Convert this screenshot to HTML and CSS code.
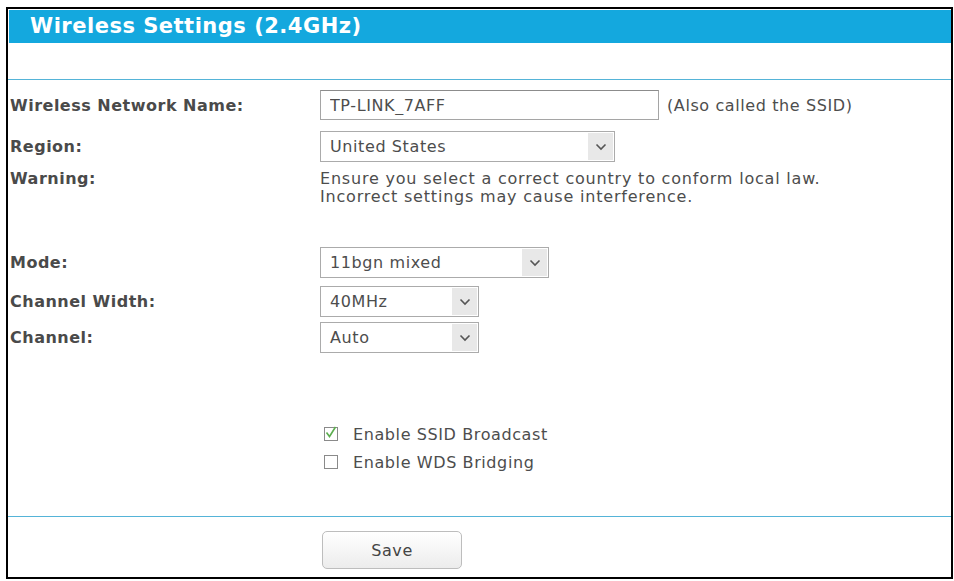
FILE: index.html
```html
<!DOCTYPE html>
<html lang="en">
<head>
<meta charset="UTF-8">
<title>Wireless Settings</title>
<link rel="stylesheet" href="styles.css">
</head>
<body>
<div class="frame">
  <h1 class="title">Wireless Settings (2.4GHz)</h1>
  <div class="rule top-rule"></div>

  <div class="row row-name">
    <label class="label" for="ssid">Wireless Network Name:</label>
    <div class="field">
      <input class="text" id="ssid" type="text" value="TP-LINK_7AFF">
      <span class="hint">(Also called the SSID)</span>
    </div>
  </div>

  <div class="row row-region">
    <label class="label">Region:</label>
    <div class="field">
      <div class="select w-region"><span class="value">United States</span><span class="arrow"><svg width="12" height="8" viewBox="0 0 12 8"><path d="M1.5 1.5 L6 6 L10.5 1.5" fill="none" stroke="#555" stroke-width="1.6"/></svg></span></div>
    </div>
  </div>

  <div class="row row-warning">
    <label class="label">Warning:</label>
    <div class="field note">Ensure you select a correct country to conform local law.<br>Incorrect settings may cause interference.</div>
  </div>

  <div class="row row-mode">
    <label class="label">Mode:</label>
    <div class="field">
      <div class="select w-mode"><span class="value">11bgn mixed</span><span class="arrow"><svg width="12" height="8" viewBox="0 0 12 8"><path d="M1.5 1.5 L6 6 L10.5 1.5" fill="none" stroke="#555" stroke-width="1.6"/></svg></span></div>
    </div>
  </div>

  <div class="row row-width">
    <label class="label">Channel Width:</label>
    <div class="field">
      <div class="select w-small"><span class="value">40MHz</span><span class="arrow"><svg width="12" height="8" viewBox="0 0 12 8"><path d="M1.5 1.5 L6 6 L10.5 1.5" fill="none" stroke="#555" stroke-width="1.6"/></svg></span></div>
    </div>
  </div>

  <div class="row row-channel">
    <label class="label">Channel:</label>
    <div class="field">
      <div class="select w-small"><span class="value">Auto</span><span class="arrow"><svg width="12" height="8" viewBox="0 0 12 8"><path d="M1.5 1.5 L6 6 L10.5 1.5" fill="none" stroke="#555" stroke-width="1.6"/></svg></span></div>
    </div>
  </div>

  <div class="row row-check first-check">
    <div class="label"></div>
    <div class="field check">
      <span class="box"><svg width="14" height="14" viewBox="0 0 14 14"><path d="M2.5 6.5 L5.5 10.5 L11.5 1" fill="none" stroke="#5cae4f" stroke-width="1.6"/></svg></span>
      <span>Enable SSID Broadcast</span>
    </div>
  </div>

  <div class="row row-check">
    <div class="label"></div>
    <div class="field check">
      <span class="box"></span>
      <span>Enable WDS Bridging</span>
    </div>
  </div>

  <div class="rule bottom-rule"></div>

  <div class="row row-save">
    <div class="label"></div>
    <div class="field"><button class="save">Save</button></div>
  </div>
</div>
</body>
</html>
```

FILE: styles.css
```css
html, body {
  margin: 0;
  background: #fff;
}
body {
  font-family: "DejaVu Sans", Verdana, sans-serif;
  font-size: 16px;
  letter-spacing: 0.6px;
  color: #4d4d4d;
}
.frame {
  margin: 7px 0 0 6px;
  width: 947px;
  height: 572px;
  border: 2px solid #000;
  box-sizing: border-box;
}
.title {
  margin: 1px 0 0 1px;
  height: 33px;
  line-height: 33px;
  background: #14a8de;
  color: #fff;
  font-size: 21px;
  font-weight: bold;
  letter-spacing: 0.5px;
  padding-left: 21px;
}
.rule {
  height: 1px;
  background: #55b4d8;
}
.top-rule {
  margin-top: 36px;
}
.bottom-rule {
  margin-top: 40px;
}
.row {
  display: flex;
  align-items: center;
}
.label {
  width: 310px;
  padding-left: 2px;
  font-weight: bold;
  letter-spacing: 0.5px;
  color: #4a4a4a;
  flex: none;
}
.field {
  display: flex;
  align-items: center;
}
.row-name { margin-top: 10px; }
.row-region { margin-top: 11px; }
.row-warning { margin-top: 8px; align-items: flex-start; }
.row-warning .label { line-height: 18px; }
.row-mode { margin-top: 41px; }
.row-width { margin-top: 8px; }
.row-channel { margin-top: 5px; }
.first-check { margin-top: 67px; }
.row-check { height: 28px; }
.row-save { margin-top: 14px; }

.text {
  width: 339px;
  height: 30px;
  box-sizing: border-box;
  border: 1px solid #a5a5a5;
  border-top-color: #8c8c8c;
  padding: 0 9px;
  font: inherit;
  letter-spacing: inherit;
  color: #4d4d4d;
  margin: 0;
}
.hint {
  margin-left: 8px;
}
.note {
  line-height: 18px;
  letter-spacing: 0.8px;
  display: block;
}
.select {
  position: relative;
  height: 31px;
  box-sizing: border-box;
  border: 1px solid #ababab;
  display: flex;
  align-items: center;
  padding-left: 9px;
}
.w-region { width: 295px; }
.w-mode { width: 229px; }
.w-small { width: 159px; }
.select .value {
  flex: 1;
}
.select .arrow {
  width: 25px;
  align-self: stretch;
  margin: 1px;
  background: #e8e8e8;
  display: flex;
  align-items: center;
  justify-content: center;
}
.check {
  padding-left: 4px;
}
.box {
  width: 14px;
  height: 14px;
  border: 1px solid #8a8a8a;
  box-sizing: border-box;
  margin-right: 15px;
  display: flex;
}
.box svg {
  margin: -2px 0 0 -1px;
  overflow: visible;
  flex: none;
}
.save {
  margin-left: 2px;
  width: 140px;
  height: 38px;
  border: 1px solid #bdbdbd;
  border-radius: 5px;
  background: linear-gradient(#ffffff, #ececec);
  font: inherit;
  font-size: 16px;
  letter-spacing: 0.6px;
  color: #444;
}
```
